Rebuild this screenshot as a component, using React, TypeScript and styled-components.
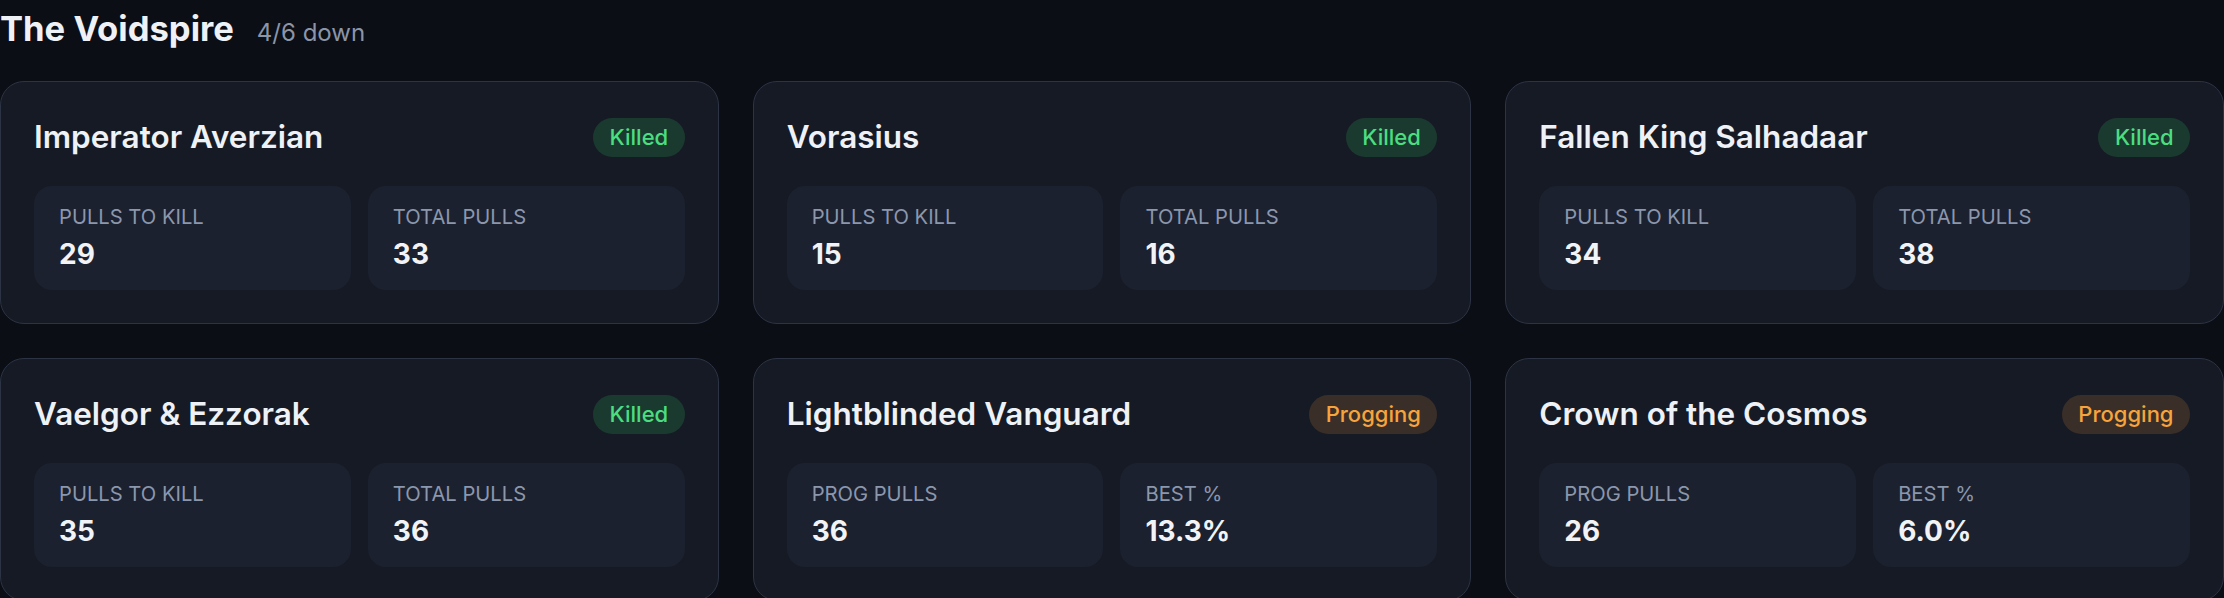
import React from 'react'
import styled, { createGlobalStyle, css } from 'styled-components'

const GlobalStyle = createGlobalStyle`
  html, body {
    margin: 0;
    padding: 0;
    background: #0b0e15;
  }
  body {
    font-family: Inter, "Noto Sans", "Liberation Sans", sans-serif;
    color: #eef1f6;
    -webkit-font-smoothing: antialiased;
  }
`

type Status = 'killed' | 'progging'

type Boss = {
  name: string
  status: Status
  stats: [string, string][]
}

const bosses: Boss[] = [
  {
    name: 'Imperator Averzian',
    status: 'killed',
    stats: [
      ['Pulls to kill', '29'],
      ['Total pulls', '33'],
    ],
  },
  {
    name: 'Vorasius',
    status: 'killed',
    stats: [
      ['Pulls to kill', '15'],
      ['Total pulls', '16'],
    ],
  },
  {
    name: 'Fallen King Salhadaar',
    status: 'killed',
    stats: [
      ['Pulls to kill', '34'],
      ['Total pulls', '38'],
    ],
  },
  {
    name: 'Vaelgor & Ezzorak',
    status: 'killed',
    stats: [
      ['Pulls to kill', '35'],
      ['Total pulls', '36'],
    ],
  },
  {
    name: 'Lightblinded Vanguard',
    status: 'progging',
    stats: [
      ['Prog pulls', '36'],
      ['Best %', '13.3%'],
    ],
  },
  {
    name: 'Crown of the Cosmos',
    status: 'progging',
    stats: [
      ['Prog pulls', '26'],
      ['Best %', '6.0%'],
    ],
  },
]

const Page = styled.main`
  width: 2224px;
  padding-top: 4px;
`

const Heading = styled.header`
  display: flex;
  align-items: baseline;
  gap: 23px;
  height: 48px;
  margin-bottom: 29px;
`

const Title = styled.h1`
  margin: 0;
  font-size: 34.6px;
  line-height: 48px;
  font-weight: 700;
  color: #eef1f6;
`

const Progress = styled.span`
  font-size: 24px;
  line-height: 48px;
  color: #8a95a9;
`

const Grid = styled.section`
  display: grid;
  grid-template-columns: repeat(3, 1fr);
  gap: 34px;
`

const Card = styled.article`
  background: #161a25;
  border: 1px solid #2c3344;
  border-radius: 24px;
  padding: 33px;
`

const CardHead = styled.div`
  display: flex;
  align-items: center;
  justify-content: space-between;
  height: 44px;
  margin-bottom: 27px;
`

const BossName = styled.h2`
  margin: 0;
  font-size: 31.5px;
  line-height: 44px;
  font-weight: 600;
  color: #eef1f6;
`

const Badge = styled.span<{ $status: Status }>`
  display: inline-flex;
  align-items: center;
  height: 39px;
  padding: 0 16.5px;
  border-radius: 999px;
  font-size: 22px;
  font-weight: 500;
  ${p =>
    p.$status === 'killed'
      ? css`
          background: #1b3a2f;
          color: #4ade80;
        `
      : css`
          background: #3a2f28;
          color: #f7a43c;
        `}
`

const Stats = styled.div`
  display: grid;
  grid-template-columns: 1fr 1fr;
  gap: 17px;
`

const StatBox = styled.div`
  background: #1c2130;
  border-radius: 18px;
  padding: 16px 25px;
`

const StatLabel = styled.div`
  font-size: 20.2px;
  line-height: 30px;
  text-transform: uppercase;
  color: #8b97ac;
`

const StatValue = styled.div`
  margin-top: 3px;
  font-size: 28px;
  line-height: 39px;
  font-weight: 700;
  color: #f1f3f7;
`

const BossCard = ({ boss }: { boss: Boss }) => (
  <Card>
    <CardHead>
      <BossName>{boss.name}</BossName>
      <Badge $status={boss.status}>
        {boss.status === 'killed' ? 'Killed' : 'Progging'}
      </Badge>
    </CardHead>
    <Stats>
      {boss.stats.map(([label, value]) => (
        <StatBox key={label}>
          <StatLabel>{label}</StatLabel>
          <StatValue>{value}</StatValue>
        </StatBox>
      ))}
    </Stats>
  </Card>
)

export default function App() {
  const down = bosses.filter(b => b.status === 'killed').length
  return (
    <>
      <GlobalStyle />
      <Page>
        <Heading>
          <Title>The Voidspire</Title>
          <Progress>
            {down}/{bosses.length} down
          </Progress>
        </Heading>
        <Grid>
          {bosses.map(b => (
            <BossCard key={b.name} boss={b} />
          ))}
        </Grid>
      </Page>
    </>
  )
}
